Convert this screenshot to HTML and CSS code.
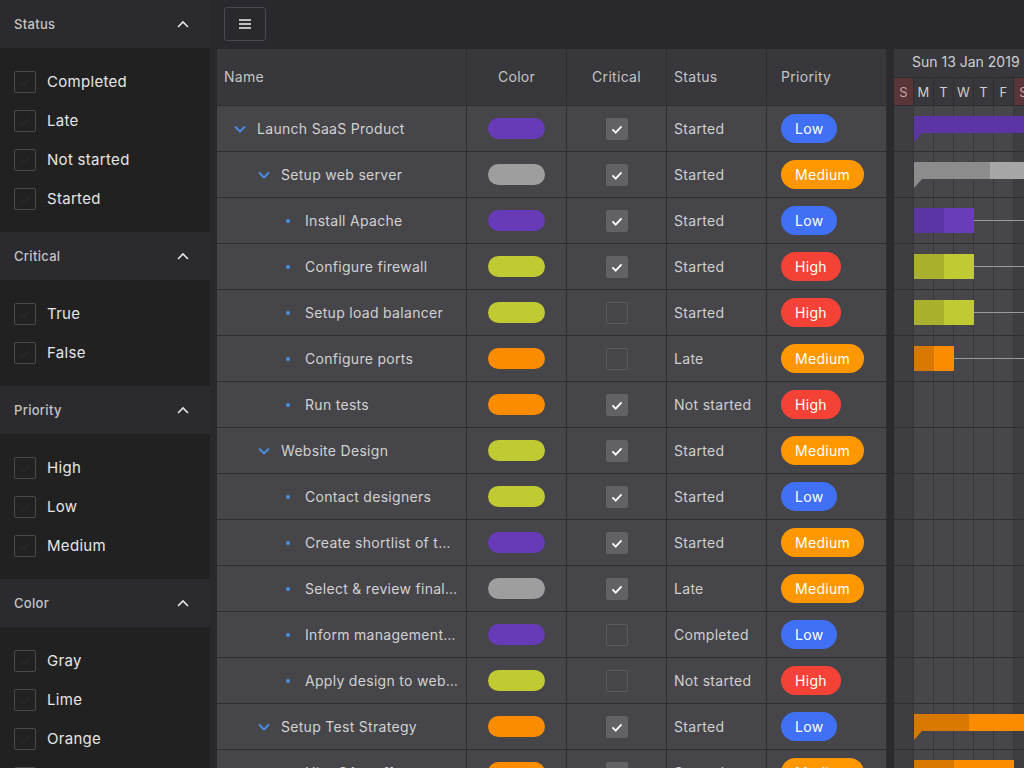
FILE: index.html
```html
<!DOCTYPE html>
<html>
<head>
<meta charset="utf-8">
<link rel="stylesheet" href="styles.css">
</head>
<body>
<div class="app">
  <aside class="sidebar">
    <section class="fgroup">
      <div class="fhead"><span>Status</span><svg class="chev" viewBox="0 0 12 8" width="12" height="8"><path d="M1 7 L6 2 L11 7" fill="none" stroke="#e6e6e6" stroke-width="1.6"/></svg></div>
      <div class="fbody">
        <label class="fitem"><span class="fbox"><svg viewBox="0 0 22 22"><path d="M6 11.5 L9.5 15 L16 8" fill="none" stroke="#2a2a2a" stroke-width="1.5"/></svg></span>Completed</label>
        <label class="fitem"><span class="fbox"><svg viewBox="0 0 22 22"><path d="M6 11.5 L9.5 15 L16 8" fill="none" stroke="#2a2a2a" stroke-width="1.5"/></svg></span>Late</label>
        <label class="fitem"><span class="fbox"><svg viewBox="0 0 22 22"><path d="M6 11.5 L9.5 15 L16 8" fill="none" stroke="#2a2a2a" stroke-width="1.5"/></svg></span>Not started</label>
        <label class="fitem"><span class="fbox"><svg viewBox="0 0 22 22"><path d="M6 11.5 L9.5 15 L16 8" fill="none" stroke="#2a2a2a" stroke-width="1.5"/></svg></span>Started</label>
      </div>
    </section>
    <section class="fgroup">
      <div class="fhead"><span>Critical</span><svg class="chev" viewBox="0 0 12 8" width="12" height="8"><path d="M1 7 L6 2 L11 7" fill="none" stroke="#e6e6e6" stroke-width="1.6"/></svg></div>
      <div class="fbody">
        <label class="fitem"><span class="fbox"><svg viewBox="0 0 22 22"><path d="M6 11.5 L9.5 15 L16 8" fill="none" stroke="#2a2a2a" stroke-width="1.5"/></svg></span>True</label>
        <label class="fitem"><span class="fbox"><svg viewBox="0 0 22 22"><path d="M6 11.5 L9.5 15 L16 8" fill="none" stroke="#2a2a2a" stroke-width="1.5"/></svg></span>False</label>
      </div>
    </section>
    <section class="fgroup">
      <div class="fhead"><span>Priority</span><svg class="chev" viewBox="0 0 12 8" width="12" height="8"><path d="M1 7 L6 2 L11 7" fill="none" stroke="#e6e6e6" stroke-width="1.6"/></svg></div>
      <div class="fbody">
        <label class="fitem"><span class="fbox"><svg viewBox="0 0 22 22"><path d="M6 11.5 L9.5 15 L16 8" fill="none" stroke="#2a2a2a" stroke-width="1.5"/></svg></span>High</label>
        <label class="fitem"><span class="fbox"><svg viewBox="0 0 22 22"><path d="M6 11.5 L9.5 15 L16 8" fill="none" stroke="#2a2a2a" stroke-width="1.5"/></svg></span>Low</label>
        <label class="fitem"><span class="fbox"><svg viewBox="0 0 22 22"><path d="M6 11.5 L9.5 15 L16 8" fill="none" stroke="#2a2a2a" stroke-width="1.5"/></svg></span>Medium</label>
      </div>
    </section>
    <section class="fgroup">
      <div class="fhead"><span>Color</span><svg class="chev" viewBox="0 0 12 8" width="12" height="8"><path d="M1 7 L6 2 L11 7" fill="none" stroke="#e6e6e6" stroke-width="1.6"/></svg></div>
      <div class="fbody">
        <label class="fitem"><span class="fbox"><svg viewBox="0 0 22 22"><path d="M6 11.5 L9.5 15 L16 8" fill="none" stroke="#2a2a2a" stroke-width="1.5"/></svg></span>Gray</label>
        <label class="fitem"><span class="fbox"><svg viewBox="0 0 22 22"><path d="M6 11.5 L9.5 15 L16 8" fill="none" stroke="#2a2a2a" stroke-width="1.5"/></svg></span>Lime</label>
        <label class="fitem"><span class="fbox"><svg viewBox="0 0 22 22"><path d="M6 11.5 L9.5 15 L16 8" fill="none" stroke="#2a2a2a" stroke-width="1.5"/></svg></span>Orange</label>
        <label class="fitem"><span class="fbox"><svg viewBox="0 0 22 22"><path d="M6 11.5 L9.5 15 L16 8" fill="none" stroke="#2a2a2a" stroke-width="1.5"/></svg></span>Purple</label>
      </div>
    </section>
  </aside>

  <main class="main">
    <div class="toolbar">
      <button class="menu-btn"><svg viewBox="0 0 14 12" width="14" height="12"><path d="M1 2 H13 M1 6 H13 M1 10 H13" stroke="#bdbdbd" stroke-width="2"/></svg></button>
    </div>
    <div class="workspace">
      <div class="grid">
        <div class="row head">
          <div class="c name">Name</div>
          <div class="c color center">Color</div>
          <div class="c crit center">Critical</div>
          <div class="c status">Status</div>
          <div class="c prio">Priority</div>
        </div>

        <div class="row">
          <div class="c name l0"><svg class="exp" viewBox="0 0 12 8"><path d="M1 1.5 L6 6.5 L11 1.5" fill="none" stroke="#4a90e2" stroke-width="1.8"/></svg><span class="txt">Launch SaaS Product</span></div>
          <div class="c color center"><span class="pill purple"></span></div>
          <div class="c crit center"><span class="cb on"><svg viewBox="0 0 22 22"><path d="M6 11.5 L9.5 15 L16 8" fill="none" stroke="#fff" stroke-width="2"/></svg></span></div>
          <div class="c status">Started</div>
          <div class="c prio"><span class="badge low">Low</span></div>
        </div>
        <div class="row">
          <div class="c name l1"><svg class="exp" viewBox="0 0 12 8"><path d="M1 1.5 L6 6.5 L11 1.5" fill="none" stroke="#4a90e2" stroke-width="1.8"/></svg><span class="txt">Setup web server</span></div>
          <div class="c color center"><span class="pill gray"></span></div>
          <div class="c crit center"><span class="cb on"><svg viewBox="0 0 22 22"><path d="M6 11.5 L9.5 15 L16 8" fill="none" stroke="#fff" stroke-width="2"/></svg></span></div>
          <div class="c status">Started</div>
          <div class="c prio"><span class="badge medium">Medium</span></div>
        </div>
        <div class="row">
          <div class="c name l2"><span class="dot"></span><span class="txt">Install Apache</span></div>
          <div class="c color center"><span class="pill purple"></span></div>
          <div class="c crit center"><span class="cb on"><svg viewBox="0 0 22 22"><path d="M6 11.5 L9.5 15 L16 8" fill="none" stroke="#fff" stroke-width="2"/></svg></span></div>
          <div class="c status">Started</div>
          <div class="c prio"><span class="badge low">Low</span></div>
        </div>
        <div class="row">
          <div class="c name l2"><span class="dot"></span><span class="txt">Configure firewall</span></div>
          <div class="c color center"><span class="pill lime"></span></div>
          <div class="c crit center"><span class="cb on"><svg viewBox="0 0 22 22"><path d="M6 11.5 L9.5 15 L16 8" fill="none" stroke="#fff" stroke-width="2"/></svg></span></div>
          <div class="c status">Started</div>
          <div class="c prio"><span class="badge high">High</span></div>
        </div>
        <div class="row">
          <div class="c name l2"><span class="dot"></span><span class="txt">Setup load balancer</span></div>
          <div class="c color center"><span class="pill lime"></span></div>
          <div class="c crit center"><span class="cb"></span></div>
          <div class="c status">Started</div>
          <div class="c prio"><span class="badge high">High</span></div>
        </div>
        <div class="row">
          <div class="c name l2"><span class="dot"></span><span class="txt">Configure ports</span></div>
          <div class="c color center"><span class="pill orange"></span></div>
          <div class="c crit center"><span class="cb"></span></div>
          <div class="c status">Late</div>
          <div class="c prio"><span class="badge medium">Medium</span></div>
        </div>
        <div class="row">
          <div class="c name l2"><span class="dot"></span><span class="txt">Run tests</span></div>
          <div class="c color center"><span class="pill orange"></span></div>
          <div class="c crit center"><span class="cb on"><svg viewBox="0 0 22 22"><path d="M6 11.5 L9.5 15 L16 8" fill="none" stroke="#fff" stroke-width="2"/></svg></span></div>
          <div class="c status">Not started</div>
          <div class="c prio"><span class="badge high">High</span></div>
        </div>
        <div class="row">
          <div class="c name l1"><svg class="exp" viewBox="0 0 12 8"><path d="M1 1.5 L6 6.5 L11 1.5" fill="none" stroke="#4a90e2" stroke-width="1.8"/></svg><span class="txt">Website Design</span></div>
          <div class="c color center"><span class="pill lime"></span></div>
          <div class="c crit center"><span class="cb on"><svg viewBox="0 0 22 22"><path d="M6 11.5 L9.5 15 L16 8" fill="none" stroke="#fff" stroke-width="2"/></svg></span></div>
          <div class="c status">Started</div>
          <div class="c prio"><span class="badge medium">Medium</span></div>
        </div>
        <div class="row">
          <div class="c name l2"><span class="dot"></span><span class="txt">Contact designers</span></div>
          <div class="c color center"><span class="pill lime"></span></div>
          <div class="c crit center"><span class="cb on"><svg viewBox="0 0 22 22"><path d="M6 11.5 L9.5 15 L16 8" fill="none" stroke="#fff" stroke-width="2"/></svg></span></div>
          <div class="c status">Started</div>
          <div class="c prio"><span class="badge low">Low</span></div>
        </div>
        <div class="row">
          <div class="c name l2"><span class="dot"></span><span class="txt">Create shortlist of three designers</span></div>
          <div class="c color center"><span class="pill purple"></span></div>
          <div class="c crit center"><span class="cb on"><svg viewBox="0 0 22 22"><path d="M6 11.5 L9.5 15 L16 8" fill="none" stroke="#fff" stroke-width="2"/></svg></span></div>
          <div class="c status">Started</div>
          <div class="c prio"><span class="badge medium">Medium</span></div>
        </div>
        <div class="row">
          <div class="c name l2"><span class="dot"></span><span class="txt">Select &amp; review final design</span></div>
          <div class="c color center"><span class="pill gray"></span></div>
          <div class="c crit center"><span class="cb on"><svg viewBox="0 0 22 22"><path d="M6 11.5 L9.5 15 L16 8" fill="none" stroke="#fff" stroke-width="2"/></svg></span></div>
          <div class="c status">Late</div>
          <div class="c prio"><span class="badge medium">Medium</span></div>
        </div>
        <div class="row">
          <div class="c name l2"><span class="dot"></span><span class="txt">Inform management about decision</span></div>
          <div class="c color center"><span class="pill purple"></span></div>
          <div class="c crit center"><span class="cb"></span></div>
          <div class="c status">Completed</div>
          <div class="c prio"><span class="badge low">Low</span></div>
        </div>
        <div class="row">
          <div class="c name l2"><span class="dot"></span><span class="txt">Apply design to web site</span></div>
          <div class="c color center"><span class="pill lime"></span></div>
          <div class="c crit center"><span class="cb"></span></div>
          <div class="c status">Not started</div>
          <div class="c prio"><span class="badge high">High</span></div>
        </div>
        <div class="row">
          <div class="c name l1"><svg class="exp" viewBox="0 0 12 8"><path d="M1 1.5 L6 6.5 L11 1.5" fill="none" stroke="#4a90e2" stroke-width="1.8"/></svg><span class="txt">Setup Test Strategy</span></div>
          <div class="c color center"><span class="pill orange"></span></div>
          <div class="c crit center"><span class="cb on"><svg viewBox="0 0 22 22"><path d="M6 11.5 L9.5 15 L16 8" fill="none" stroke="#fff" stroke-width="2"/></svg></span></div>
          <div class="c status">Started</div>
          <div class="c prio"><span class="badge low">Low</span></div>
        </div>
        <div class="row">
          <div class="c name l2"><span class="dot"></span><span class="txt">Hire QA staff</span></div>
          <div class="c color center"><span class="pill orange"></span></div>
          <div class="c crit center"><span class="cb on"><svg viewBox="0 0 22 22"><path d="M6 11.5 L9.5 15 L16 8" fill="none" stroke="#fff" stroke-width="2"/></svg></span></div>
          <div class="c status">Started</div>
          <div class="c prio"><span class="badge medium">Medium</span></div>
        </div>
      </div>

      <div class="splitter"></div>

      <div class="gantt">
        <div class="ghead">
          <div class="gdate">Sun 13 Jan 2019</div>
          <div class="gdays">
            <span class="day we">S</span><span class="day">M</span><span class="day">T</span><span class="day">W</span><span class="day">T</span><span class="day">F</span><span class="day we">S</span>
          </div>
        </div>
        <div class="gbody">
          <div class="grow"><div class="bar summary purple-s" style="left:20px;width:140px"><span class="done" style="width:140px"></span><i class="tail"></i></div></div>
          <div class="grow"><div class="bar summary gray-s" style="left:20px;width:140px"><span class="done" style="width:76px"></span><i class="tail"></i></div></div>
          <div class="grow"><div class="bar task purple-t" style="left:20px;width:60px"><span class="done" style="width:30px"></span></div><div class="link" style="left:80px"></div></div>
          <div class="grow"><div class="bar task lime-t" style="left:20px;width:60px"><span class="done" style="width:30px"></span></div><div class="link" style="left:80px"></div></div>
          <div class="grow"><div class="bar task lime-t" style="left:20px;width:60px"><span class="done" style="width:30px"></span></div><div class="link" style="left:80px"></div></div>
          <div class="grow"><div class="bar task orange-t" style="left:20px;width:40px"><span class="done" style="width:20px"></span></div><div class="link" style="left:60px"></div></div>
          <div class="grow"></div>
          <div class="grow"></div>
          <div class="grow"></div>
          <div class="grow"></div>
          <div class="grow"></div>
          <div class="grow"></div>
          <div class="grow"></div>
          <div class="grow"><div class="bar summary orange-s" style="left:20px;width:140px"><span class="done" style="width:55px"></span><i class="tail"></i></div></div>
          <div class="grow"><div class="bar task orange-t" style="left:20px;width:100px"><span class="done" style="width:40px"></span></div></div>
        </div>
      </div>
    </div>
  </main>
</div>
</body>
</html>
```

FILE: styles.css
```css
* { box-sizing: border-box; }
html, body { margin: 0; padding: 0; }
body {
  background: #29282d;
  font-family: "Inter", "Noto Sans", sans-serif;
  letter-spacing: 0.3px;
  color: #d0d0d0;
  width: 1024px;
  height: 768px;
  overflow: hidden;
}
.app { display: flex; height: 768px; overflow: hidden; }

/* Sidebar */
.sidebar { width: 210px; flex: none; background: #212121; overflow: hidden; }
.fhead {
  height: 48px;
  background: #2b2a2f;
  display: flex;
  align-items: center;
  justify-content: space-between;
  padding: 0 21px 0 14px;
  font-size: 13px;
  font-weight: 500;
  color: #c4c4c4;
}
.fhead .chev { display: block; }
.fbody { padding: 14px 0; }
.fitem {
  height: 39px;
  display: flex;
  align-items: center;
  padding-left: 14px;
  font-size: 15px;
  color: #e6e6e6;
}
.fbox {
  width: 22px; height: 22px;
  border: 1px solid #4a4a4a;
  border-radius: 2px;
  margin-right: 11px;
  display: flex;
}
.fbox svg { width: 20px; height: 20px; }

/* Main */
.main { flex: 1; display: flex; flex-direction: column; min-width: 0; }
.toolbar { height: 49px; flex: none; padding: 7px 0 0 14px; }
.menu-btn {
  width: 42px; height: 34px;
  background: transparent;
  border: 1px solid #4a4950;
  border-radius: 3px;
  display: flex; align-items: center; justify-content: center;
  padding: 0;
}
.workspace { flex: 1; display: flex; padding-left: 7px; min-height: 0; }

/* Grid */
.grid { width: 670px; flex: none; }
.row { display: flex; height: 46px; background: #46454a; border-bottom: 1px solid #2e2d32; }
.row.head { height: 57px; background: #38373c; padding-bottom: 2px; }
.c {
  border-right: 1px solid #2e2d32;
  display: flex;
  align-items: center;
  font-size: 14px;
  color: #cfcfcf;
  padding: 0 7px;
  white-space: nowrap;
  overflow: hidden;
}
.row.head .c { color: #c4c4c4; }
.c.center { justify-content: center; }
.c.name { width: 250px; padding-right: 8px; }
.c.color, .c.crit, .c.status { width: 100px; }
.c.prio { width: 120px; padding-left: 14px; }
.c.name.l0 { padding-left: 17px; }
.c.name.l1 { padding-left: 41px; }
.c.name.l2 { padding-left: 69px; }
.exp { width: 12px; height: 8px; flex: none; margin-right: 11px; margin-top: 1px; }
.dot { width: 4px; height: 4px; border-radius: 50%; background: #4a90e2; flex: none; margin-right: 15px; }
.txt { overflow: hidden; text-overflow: ellipsis; white-space: nowrap; color: #d2d2d2; }

.pill { width: 57px; height: 21px; border-radius: 11px; display: block; }
.pill.purple { background: #673ab7; }
.pill.gray { background: #9e9e9e; }
.pill.lime { background: #c0ca33; }
.pill.orange { background: #fb8c00; }

.cb {
  width: 22px; height: 22px;
  border: 1px solid #5a595e;
  border-radius: 2px;
  display: flex;
}
.cb.on { background: #626163; border-color: #626163; }
.cb svg { width: 20px; height: 20px; }

.badge {
  display: inline-flex; align-items: center;
  height: 29px;
  padding: 0 14px;
  border-radius: 15px;
  color: #fff;
  font-size: 14px;
}
.badge.low { background: #4070f4; }
.badge.medium { background: #ff9800; }
.badge.high { background: #f44336; }

/* Splitter */
.splitter { width: 7px; flex: none; background: #2b2a2f; }

/* Gantt */
.gantt { flex: 1; min-width: 0; overflow: hidden; }
.ghead { height: 57px; background: #38373c; border-bottom: 1px solid #2e2d32; }
.gdate { height: 28px; display: flex; align-items: center; padding: 0 0 3px 18px; font-size: 14px; color: #cfcfcf; white-space: nowrap; letter-spacing: 0; }
.gdays { display: flex; height: 28px; }
.day {
  width: 20px; flex: none;
  display: flex; align-items: center; justify-content: center;
  font-size: 13px; color: #cfcfcf;
  border-right: 1px solid #2e2d32;
  border-top: 1px solid #2e2d32;
}
.day.we { background: #5a3538; color: #c9a0a3; }

.grow {
  position: relative;
  height: 46px;
  border-bottom: 1px solid #2e2d32;
  background:
    linear-gradient(to right, transparent 19px, #38373c 19px, #38373c 20px, transparent 20px) 0 0 / 20px 100% repeat-x,
    linear-gradient(to right, #3e3d42 0, #3e3d42 20px, #47464b 20px, #47464b 120px, #3e3d42 120px, #3e3d42 140px) 0 0 / 140px 100% repeat-x;
}
.bar { position: absolute; display: block; }
.bar .done { position: absolute; left: 0; top: 0; bottom: 0; display: block; }
.bar.summary { top: 10px; height: 17px; }
.bar.task { top: 10px; height: 25px; }
.tail {
  position: absolute; left: 0; top: 17px;
  width: 8px; height: 9px;
  clip-path: polygon(0 0, 100% 0, 0 100%);
}
.purple-s { background: #5c35a5; }
.purple-s .done, .purple-s .tail { background: #5c35a5; }
.gray-s { background: #a6a6a6; }
.gray-s .done, .gray-s .tail { background: #8c8c8c; }
.orange-s { background: #fb8c00; }
.orange-s .done, .orange-s .tail { background: #d97800; }
.purple-t { background: #693cba; }
.purple-t .done { background: #5c35a5; }
.lime-t { background: #c0ca33; }
.lime-t .done { background: #a9b02d; }
.orange-t { background: #fb8c00; }
.orange-t .done { background: #d97800; }
.link { position: absolute; top: 22px; right: 0; height: 1px; background: #9a9a9a; }
```
